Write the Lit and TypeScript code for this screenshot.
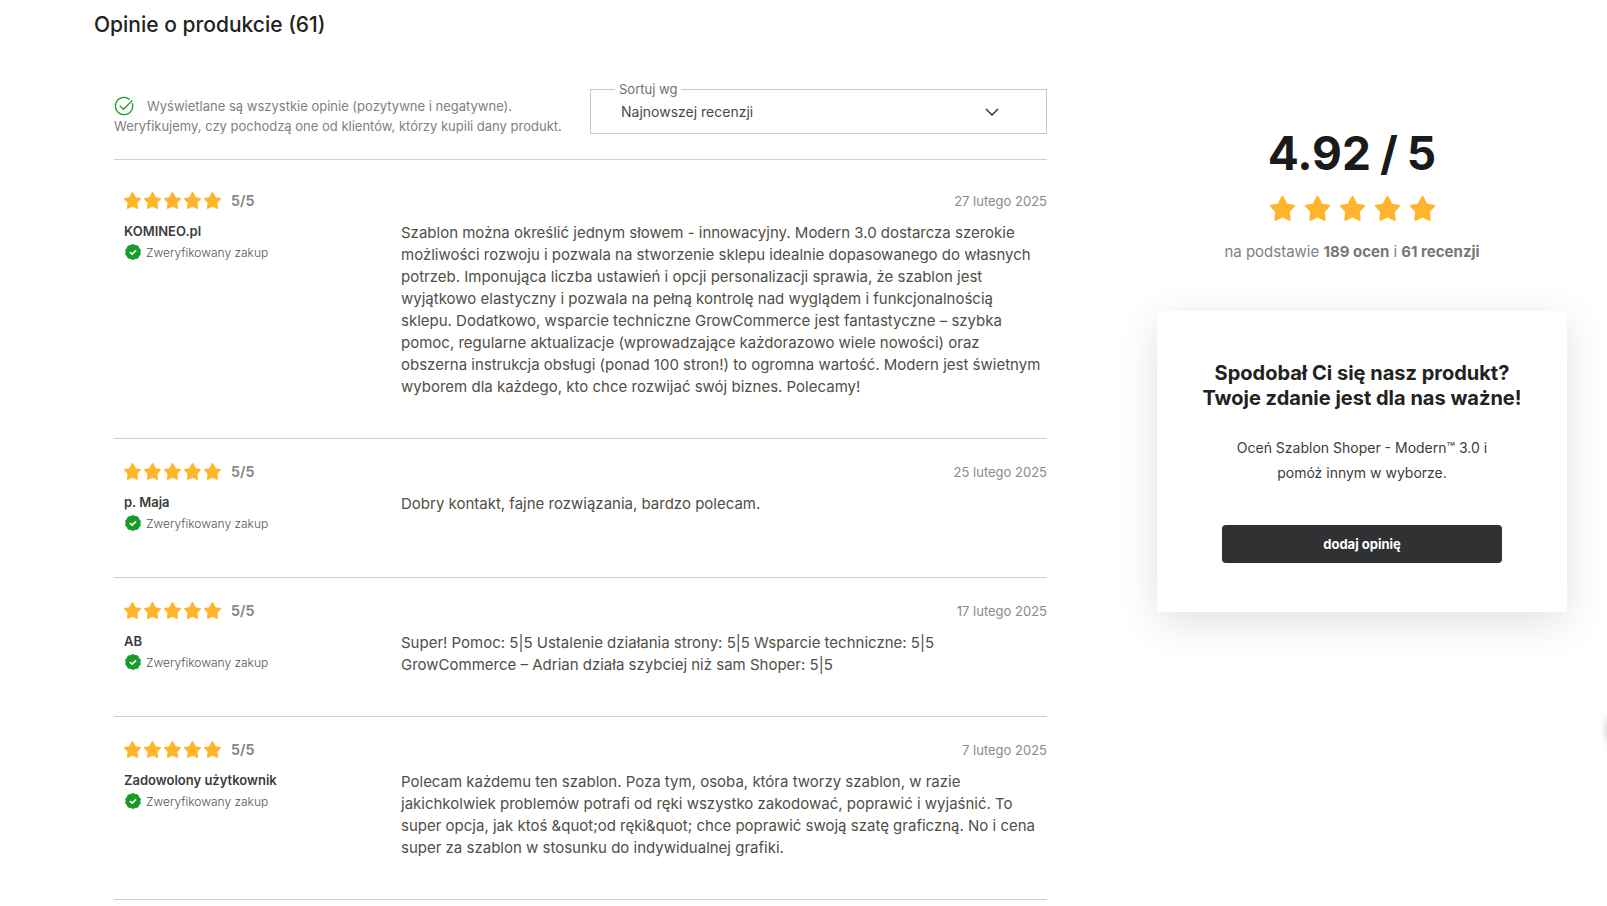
import { LitElement, html, css, svg } from "lit";
import { customElement, property } from "lit/decorators.js";

interface Review {
  author: string;
  date: string;
  text: string;
}

const REVIEWS: Review[] = [
  {
    author: "KOMINEO.pl",
    date: "27 lutego 2025",
    text: "Szablon można określić jednym słowem - innowacyjny. Modern 3.0 dostarcza szerokie możliwości rozwoju i pozwala na stworzenie sklepu idealnie dopasowanego do własnych potrzeb. Imponująca liczba ustawień i opcji personalizacji sprawia, że szablon jest wyjątkowo elastyczny i pozwala na pełną kontrolę nad wyglądem i funkcjonalnością sklepu. Dodatkowo, wsparcie techniczne GrowCommerce jest fantastyczne – szybka pomoc, regularne aktualizacje (wprowadzające każdorazowo wiele nowości) oraz obszerna instrukcja obsługi (ponad 100 stron!) to ogromna wartość. Modern jest świetnym wyborem dla każdego, kto chce rozwijać swój biznes. Polecamy!",
  },
  { author: "p. Maja", date: "25 lutego 2025", text: "Dobry kontakt, fajne rozwiązania, bardzo polecam." },
  {
    author: "AB",
    date: "17 lutego 2025",
    text: "Super! Pomoc: 5|5 Ustalenie działania strony: 5|5 Wsparcie techniczne: 5|5\nGrowCommerce – Adrian działa szybciej niż sam Shoper: 5|5",
  },
  {
    author: "Zadowolony użytkownik",
    date: "7 lutego 2025",
    text: "Polecam każdemu ten szablon. Poza tym, osoba, która tworzy szablon, w razie jakichkolwiek problemów potrafi od ręki wszystko zakodować, poprawić i wyjaśnić. To super opcja, jak ktoś &quot;od ręki&quot; chce poprawić swoją szatę graficzną. No i cena super za szablon w stosunku do indywidualnej grafiki.",
  },
];

@customElement("star-row")
export class StarRow extends LitElement {
  static styles = css`
    :host { display: flex; gap: 3px; }
    :host([large]) { gap: 10px; }
    svg { display: block; width: 17px; height: 17px; fill: #ffb52b; }
    :host([large]) svg { width: 25px; height: 25px; }
  `;
  @property({ type: Boolean, reflect: true }) large = false;

  render() {
    return [1, 2, 3, 4, 5].map(
      () => html`<svg viewBox="0 0 25 25" aria-hidden="true">
        ${svg`<path d="M11.4 .6Q12.500 -.6 13.600 .6L17.200 7.700L24 8.800Q25.700 9.300 24.600 10.700L19.800 15.900L20.700 23.600Q20.500 25.300 19 24.700L12.500 21.600L6 24.700Q4.500 25.300 4.300 23.600L5.200 15.900L.4 10.700Q-.7 9.300 1 8.800L7.800 7.700Z"/>`}
      </svg>`
    );
  }
}

@customElement("review-item")
export class ReviewItem extends LitElement {
  static styles = css`
    :host { display: block; padding: 22px 0 40px; border-bottom: 1px solid #d0d0c8; }
    .head { display: flex; align-items: center; height: 20px; padding-left: 10px; }
    .score { margin-left: 10px; font-size: 14px; font-weight: 700; color: #8c8a84; }
    .date { margin-left: auto; font-size: 13px; line-height: 20px; padding-top: 2px; color: #8c8a84; }
    .body { display: grid; grid-template-columns: 277px 1fr; padding-left: 10px; margin-top: 10px; }
    .author { font-size: 13px; line-height: 22px; font-weight: 600; color: #3c3c3c; }
    .verified { display: flex; align-items: center; gap: 4px; height: 20px; font-size: 12px; color: #555; font-weight: 300; }
    .badge { width: 18px; height: 18px; }
    .text { min-height: 44px; margin: 2px 0 0; font-size: 15px; line-height: 22px; font-weight: 400; color: #504e49; white-space: pre-line; }
  `;
  @property({ attribute: false }) review!: Review;

  render() {
    const { author, date, text } = this.review;
    return html`
      <div class="head">
        <star-row></star-row>
        <span class="score">5/5</span>
        <time class="date">${date}</time>
      </div>
      <div class="body">
        <div>
          <div class="author">${author}</div>
          <div class="verified">
            <svg class="badge" viewBox="0 0 18 18" aria-hidden="true">
              <path fill="#189b27" stroke="#189b27" stroke-linejoin="round" d="M9 1.500l2.200 1 2.600.500 1 2.300 1.600 1.500-.5 2.400.5 2.200-1.600 1.500-1 2.200-2.600.400L9 16.500l-2.200-1-2.600-.4-1-2.200-1.600-1.500.5-2.200-.5-2.400 1.600-1.500 1-2.300 2.600-.5z" />
              <path fill="none" stroke="#fff" stroke-width="1.600" d="M5.900 9.200l2.200 2 4-3.800" />
            </svg>
            Zweryfikowany zakup
          </div>
        </div>
        <p class="text">${text}</p>
      </div>
    `;
  }
}

@customElement("app-root")
export class AppRoot extends LitElement {
  static styles = css`
    :host {
      display: block;
      position: relative;
      overflow: hidden;
      min-height: 100vh;
      background: #fff;
      font-family: Inter, "Liberation Sans", sans-serif;
      color: #222;
    }
    * { box-sizing: border-box; }
    .page { display: grid; grid-template-columns: 953fr 430fr; column-gap: 90px; padding: 11px 40px 0 94px; }
    .title { grid-column: 1 / -1; margin: 0; font-size: 21px; line-height: 28px; font-weight: 500; }
    .reviews { padding: 42px 0 0 20px; }
    .toolbar { display: flex; justify-content: space-between; align-items: flex-end; gap: 20px; height: 79px; padding-bottom: 25px; border-bottom: 1px solid #d0d0c8; }
    .info { height: 38px; margin: 0; font-size: 13px; line-height: 20px; color: #808080; }
    .lead { display: flex; align-items: center; gap: 13px; }
    .ok { width: 20px; height: 20px; }
    .sort { position: relative; flex: 0 0 457px; height: 53px; margin: 0; padding: 0 0 0 24px; border: 1px solid #c8c8c8; }
    .legend { padding: 0 4px; font-size: 13px; line-height: 16px; color: #707070; }
    .select { display: block; width: 100%; height: 30px; padding: 0 6px; border: 0; background: none; appearance: none; font: 400 14px/20px Inter, "Liberation Sans", sans-serif; color: #4a4a4a; }
    .chevron { position: absolute; right: 47px; top: 11px; width: 14px; height: 8px; pointer-events: none; }
    .list { padding-top: 8px; }
    .side { padding-top: 82px; text-align: center; }
    .grade { display: flex; justify-content: center; gap: 9px; font-size: 46px; line-height: 64px; font-weight: 700; color: #1a1a1a; }
    .stars { display: flex; justify-content: center; margin-top: 11px; }
    .basis { margin: 20px 0 0; font-size: 15px; line-height: 22px; color: #808080; }
    .basis b { font-weight: 700; color: #777; }
    .card { margin: 48px 0 0 20px; padding: 50px 20px 49px; box-shadow: 0 10px 40px rgba(0, 0, 0, 0.12); background: #fff; }
    .question { margin: 0; font-size: 20px; line-height: 25px; font-weight: 700; }
    .prompt { max-width: 270px; margin: 24px auto 0; font-size: 14px; line-height: 25px; color: #3c3c3c; }
    .add { width: 280px; max-width: 100%; height: 38px; margin-top: 40px; border: 0; border-radius: 4px; background: #303133; color: #fff; font: 700 13px/20px Inter, "Liberation Sans", sans-serif; }
    .drawer { position: absolute; left: 100%; top: 710px; width: 40px; height: 40px; border-radius: 50%; box-shadow: 0 0 8px rgba(0, 0, 0, 0.25); }
  `;

  render() {
    return html`
      <main class="page">
        <h2 class="title">Opinie o produkcie (61)</h2>
        <section class="reviews">
          <div class="toolbar">
            <p class="info">
              <span class="lead">
                <svg class="ok" viewBox="0 0 20 20" fill="none" stroke="#189b27" stroke-width="1.300" aria-hidden="true">
                  <path d="M18.200 7.200A8.600 8.600 0 1 1 15.700 3.500" />
                  <path d="M5.600 9.600l3.900 3.700L18.400 4.400" />
                </svg>
                Wyświetlane są wszystkie opinie (pozytywne i negatywne).
              </span>
              Weryfikujemy, czy pochodzą one od klientów, którzy kupili dany produkt.
            </p>
            <fieldset class="sort">
              <legend class="legend"><label for="order">Sortuj wg</label></legend>
              <select class="select" id="order">
                <option>Najnowszej recenzji</option>
              </select>
              <svg class="chevron" viewBox="0 0 14 8" fill="none" stroke="#222" stroke-width="1.300" aria-hidden="true">
                <path d="M1 1l6 6 6-6" />
              </svg>
            </fieldset>
          </div>
          <div class="list">${REVIEWS.map((r) => html`<review-item .review=${r}></review-item>`)}</div>
        </section>
        <aside class="side">
          <div class="grade"><span>4.92</span><span>/</span><span>5</span></div>
          <div class="stars"><star-row large></star-row></div>
          <p class="basis">na podstawie <b>189 ocen</b> i <b>61 recenzji</b></p>
          <div class="card">
            <h3 class="question">Spodobał Ci się nasz produkt?<br />Twoje zdanie jest dla nas ważne!</h3>
            <p class="prompt">Oceń Szablon Shoper - Modern™ 3.0 i pomóż innym w wyborze.</p>
            <button class="add" type="button">dodaj opinię</button>
          </div>
        </aside>
      </main>
      <div class="drawer"></div>
    `;
  }
}
